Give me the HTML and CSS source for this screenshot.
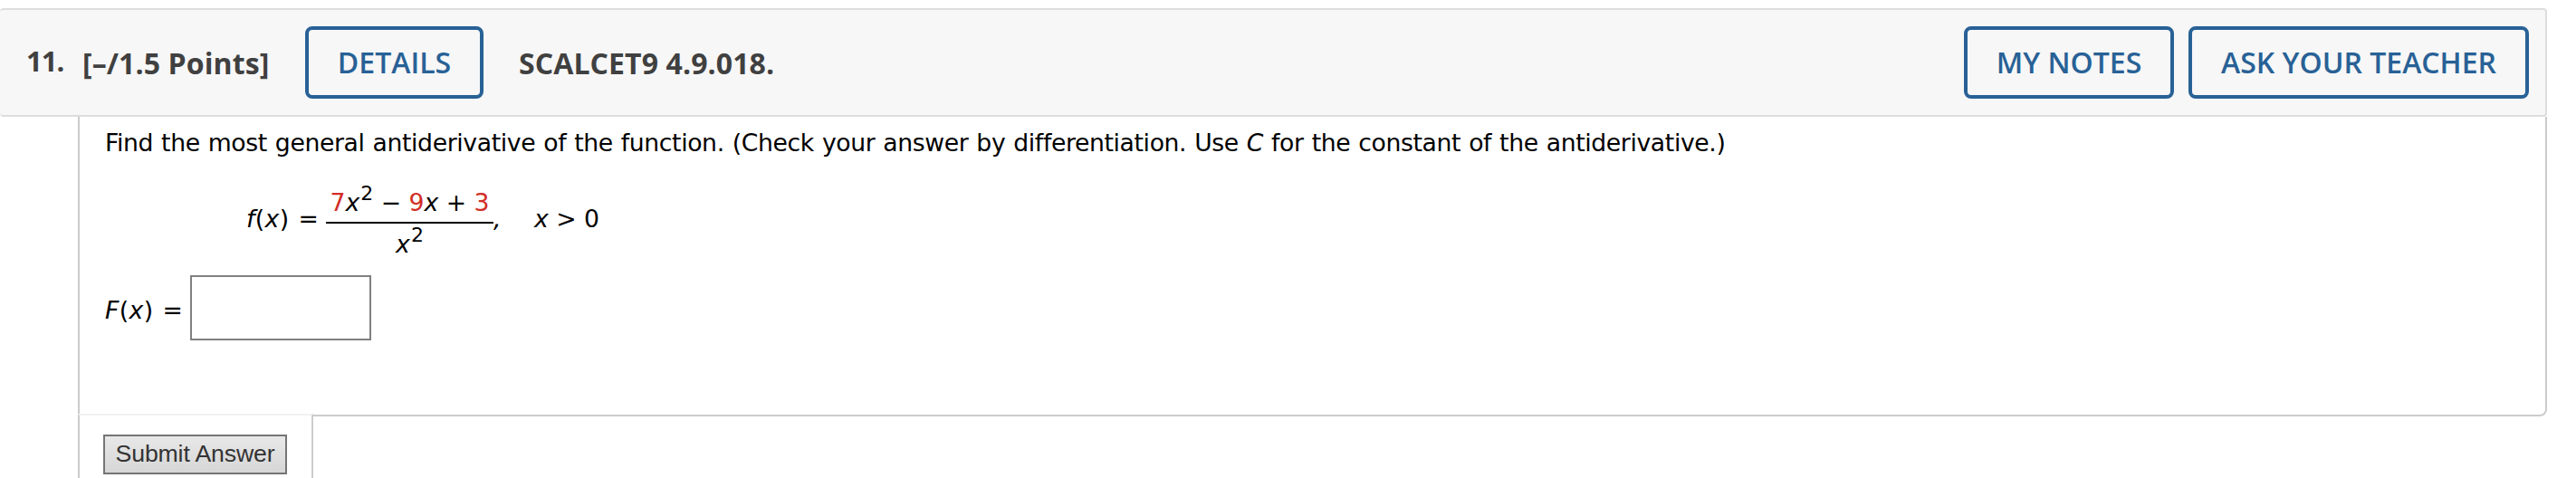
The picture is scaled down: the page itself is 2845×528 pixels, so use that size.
FILE: index.html
```
<!DOCTYPE html>
<html lang="en">
<head>
  <meta charset="utf-8">
  <title>Question 11</title>
  <link rel="stylesheet" href="styles.css">
</head>
<body>
  <div class="header">
    <span class="number">11.</span>
    <span class="points">[–/1.5 Points]</span>
    <a class="button details">DETAILS</a>
    <span class="name">SCALCET9 4.9.018.</span>
    <a class="button notes">MY NOTES</a>
    <a class="button teacher">ASK YOUR TEACHER</a>
  </div>

  <div class="question">
    <div class="text">Find the most general antiderivative of the function. (Check your answer by differentiation. Use <i>C</i> for the constant of the antiderivative.)</div>
    <div class="equation">
      <span class="lhs"><i>f</i>(<i>x</i>) =</span>
      <span class="fraction">
        <span class="top"><b>7</b><i>x</i><sup>2</sup> − <b>9</b><i>x</i> + <b>3</b></span>
        <span class="bottom"><i>x</i><sup>2</sup></span>
      </span>
      <span class="comma">,</span>
      <span class="domain"><i>x</i> &gt; 0</span>
    </div>
    <div class="answer">
      <span class="label"><i>F</i>(<i>x</i>) =</span>
      <input type="text" class="blank">
    </div>
  </div>

  <div class="submit">
    <button class="submit-button">Submit Answer</button>
  </div>
</body>
</html>
```

FILE: styles.css
```
* { box-sizing:border-box; }
body { margin:0; padding-top:9px; height:528px; overflow:hidden; background:#fff; color:#000;
       font-family:"DejaVu Sans", sans-serif; font-size:26.67px; }

/* question header */
.header { display:flex; align-items:center; width:2813px; height:120px; padding:0 18px 0 29px;
          background:#f7f7f7; border:2px solid #ddd; border-left:0; border-radius:4px;
          color:#404040; font-family:"Open Sans", sans-serif; font-size:32px; font-weight:bold;
          white-space:nowrap; }
.number { width:62px; padding-bottom:5px; font-size:31px; letter-spacing:-1px; }
.points { width:246px; letter-spacing:.1px; }
.button { height:80px; line-height:72px; border:4px solid #286196; border-radius:8px;
          color:#286196; font-weight:600; text-align:center; }
.details { width:197px; margin-right:39px; }
.name { letter-spacing:.1px; }
.notes { width:232px; margin-left:auto; margin-right:16px; }
.teacher { width:376px; }

/* question body */
.question { width:2727px; height:331px; margin-left:86px; padding:13px 0 0 28px;
            border:2px solid #ccc; border-top:0; border-radius:0 0 8px 0; line-height:32px;
            white-space:nowrap; }
.text { letter-spacing:-.375px; word-spacing:.9px; }
.equation { display:flex; height:90px; margin:34px 0 0 156px; }
.lhs { width:88px; padding-top:18px; letter-spacing:.4px; word-spacing:1px; }
.fraction { width:185px; text-align:center; }
.top, .bottom { display:block; }
.top { height:39px; padding-bottom:5px; border-bottom:2px solid #000; }
.bottom { padding-top:7px; }
.top b { color:#d12e26; font-weight:normal; }
sup { font-size:22px; line-height:0; vertical-align:12px; margin-left:1px; }
.comma { width:45px; padding-top:18px; font-style:italic; }
.domain { padding-top:18px; }
.answer { display:flex; margin-top:6px; }
.label { width:94px; padding-top:23px; letter-spacing:.4px; word-spacing:1px; }
.blank { width:200px; height:72px; background:#fff; border:2px solid #808080; border-radius:0; }

/* submit tab */
.submit { position:relative; width:260px; height:71px; margin:-3px 0 0 86px; padding:21px 0 0 28px;
          background:#fff; border:2px solid #ccc; border-top:2px solid #f2f2f2; border-bottom:0; }
.submit-button { display:block; width:203px; height:44px; margin-left:-2px; padding:0 0 2px;
                 background:linear-gradient(#e8e8e8, #d6d6d6); border:2px solid #757575;
                 color:#333; font-family:"Liberation Sans", sans-serif; font-size:26.67px;
                 letter-spacing:-.15px; }
```
